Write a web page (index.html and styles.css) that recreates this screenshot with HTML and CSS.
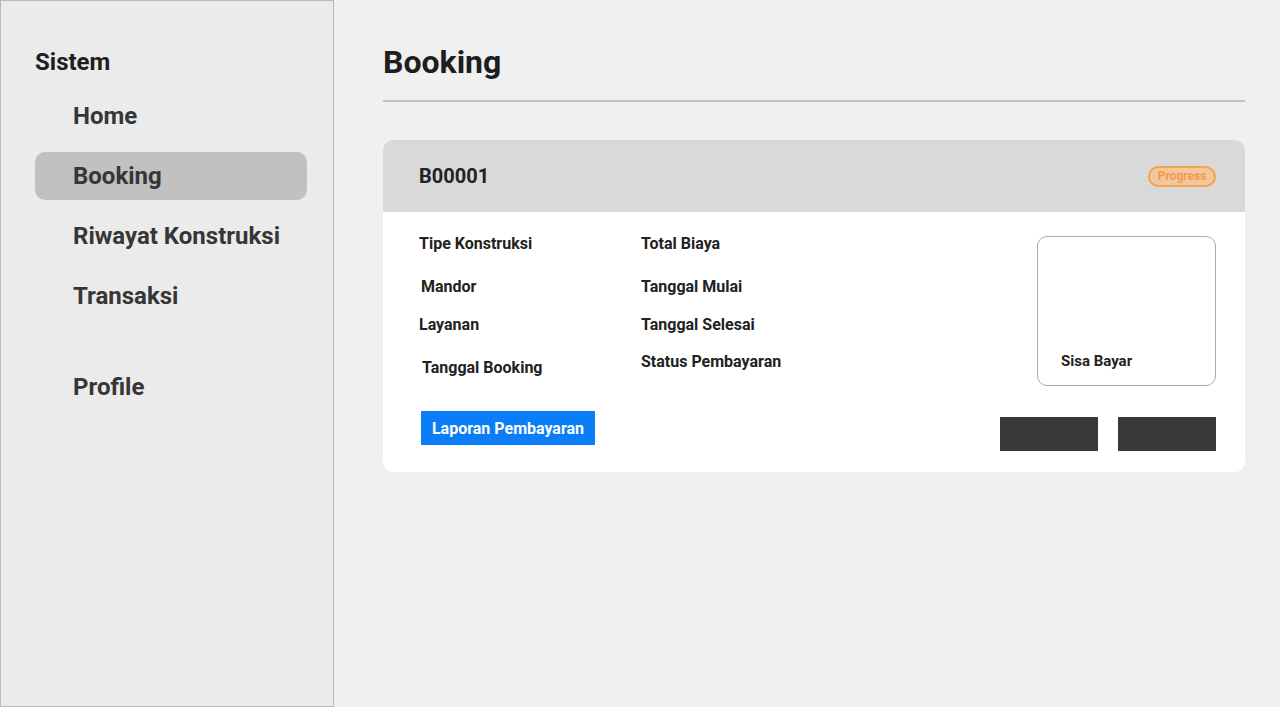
FILE: index.html
```html
<!DOCTYPE html>
<html lang="id">
<head>
<meta charset="utf-8">
<title>Booking</title>
<link rel="stylesheet" href="styles.css">
</head>
<body>
<div class="app">
  <aside class="sidebar">
    <div class="brand">Sistem</div>
    <nav class="nav">
      <div class="nav-item">Home</div>
      <div class="nav-item active">Booking</div>
      <div class="nav-item">Riwayat Konstruksi</div>
      <div class="nav-item">Transaksi</div>
      <div class="nav-item profile">Profile</div>
    </nav>
  </aside>
  <main class="main">
    <h1 class="title">Booking</h1>
    <div class="divider"></div>
    <section class="card">
      <header class="card-head">
        <span class="code">B00001</span>
        <span class="badge">Progress</span>
      </header>
      <div class="card-body">
        <div class="top-row">
          <div class="col col1">
            <div class="label l1">Tipe Konstruksi</div>
            <div class="label l2 s2">Mandor</div>
            <div class="label l3">Layanan</div>
            <div class="label l4 s3">Tanggal Booking</div>
          </div>
          <div class="col col2">
            <div class="label l1">Total Biaya</div>
            <div class="label l2">Tanggal Mulai</div>
            <div class="label l3">Tanggal Selesai</div>
            <div class="label l4b">Status Pembayaran</div>
          </div>
          <div class="sisa">
            <span class="sisa-text">Sisa Bayar</span>
          </div>
        </div>
        <div class="bottom-row">
          <button class="btn-primary">Laporan Pembayaran</button>
          <div class="actions">
            <div class="dark-btn"></div>
            <div class="dark-btn"></div>
          </div>
        </div>
      </div>
    </section>
  </main>
</div>
</body>
</html>
```

FILE: styles.css
```css
* { box-sizing: border-box; }
html, body { margin: 0; padding: 0; }
body {
  font-family: Roboto, "Liberation Sans", Arial, sans-serif;
  background: #f0f0f0;
  color: #1e1e1e;
}
.app {
  display: flex;
  width: 1280px;
  height: 707px;
}
.sidebar {
  width: 334px;
  height: 707px;
  flex: none;
  background: #ebebeb;
  border: 1px solid #b9b9b9;
  padding: 47px 0 0 34px;
}
.brand {
  font-size: 24px;
  font-weight: 700;
  line-height: 28px;
  color: #1e1e1e;
}
.nav {
  display: flex;
  flex-direction: column;
  gap: 12px;
  margin-top: 16px;
}
.nav-item {
  width: 272px;
  height: 48px;
  padding-left: 38px;
  font-size: 24px;
  font-weight: 700;
  line-height: 48px;
  color: #363636;
  border-radius: 10px;
}
.nav-item.active { background: #c1c1c1; }
.nav-item.profile { margin-top: 31px; }

.main {
  flex: 1;
  padding: 0 35px 0 49px;
}
.title {
  margin: 0;
  padding-top: 43px;
  font-size: 32px;
  font-weight: 700;
  line-height: 38px;
  color: #1e1e1e;
}
.divider {
  height: 2px;
  background: #c2c2c2;
  margin-top: 19px;
}
.card {
  margin-top: 38px;
  background: #ffffff;
  border-radius: 10px;
  overflow: hidden;
}
.card-head {
  height: 72px;
  background: #d9d9d9;
  display: flex;
  align-items: center;
  justify-content: space-between;
  padding: 0 29px 0 36px;
}
.code {
  font-size: 20px;
  font-weight: 700;
  color: #222;
}
.badge {
  width: 68px;
  height: 21px;
  border: 2px solid #f6a24f;
  background: #f1c7a0;
  color: #f59a42;
  border-radius: 11px;
  font-size: 12px;
  font-weight: 700;
  line-height: 17px;
  text-align: center;
}
.card-body {
  padding: 23px 29px 21px 36px;
}
.top-row {
  display: flex;
}
.col {
  display: flex;
  flex-direction: column;
}
.col1 { width: 222px; }
.col2 { flex: 1; }
.label {
  font-size: 16px;
  font-weight: 700;
  line-height: 18px;
  color: #222;
}
.l2 { margin-top: 25px; }
.l3 { margin-top: 20px; }
.l4 { margin-top: 25px; }
.l4b { margin-top: 19px; }
.s2 { padding-left: 2px; }
.s3 { padding-left: 3px; }
.sisa {
  width: 179px;
  height: 150px;
  margin-top: 1px;
  border: 1px solid #ababab;
  border-radius: 10px;
  display: flex;
  align-items: flex-end;
  padding: 0 0 15px 23px;
}
.sisa-text {
  font-size: 15px;
  font-weight: 700;
  line-height: 18px;
  color: #222;
}
.bottom-row {
  display: flex;
  justify-content: space-between;
  margin-top: 25px;
}
.btn-primary {
  margin-left: 2px;
  width: 174px;
  height: 34px;
  border: none;
  background: #0b7df6;
  color: #ffffff;
  font-family: Roboto, "Liberation Sans", Arial, sans-serif;
  font-size: 16px;
  font-weight: 700;
  padding: 0;
}
.actions {
  display: flex;
  gap: 20px;
  margin-top: 6px;
}
.dark-btn {
  width: 98px;
  height: 34px;
  background: #383838;
}
```
